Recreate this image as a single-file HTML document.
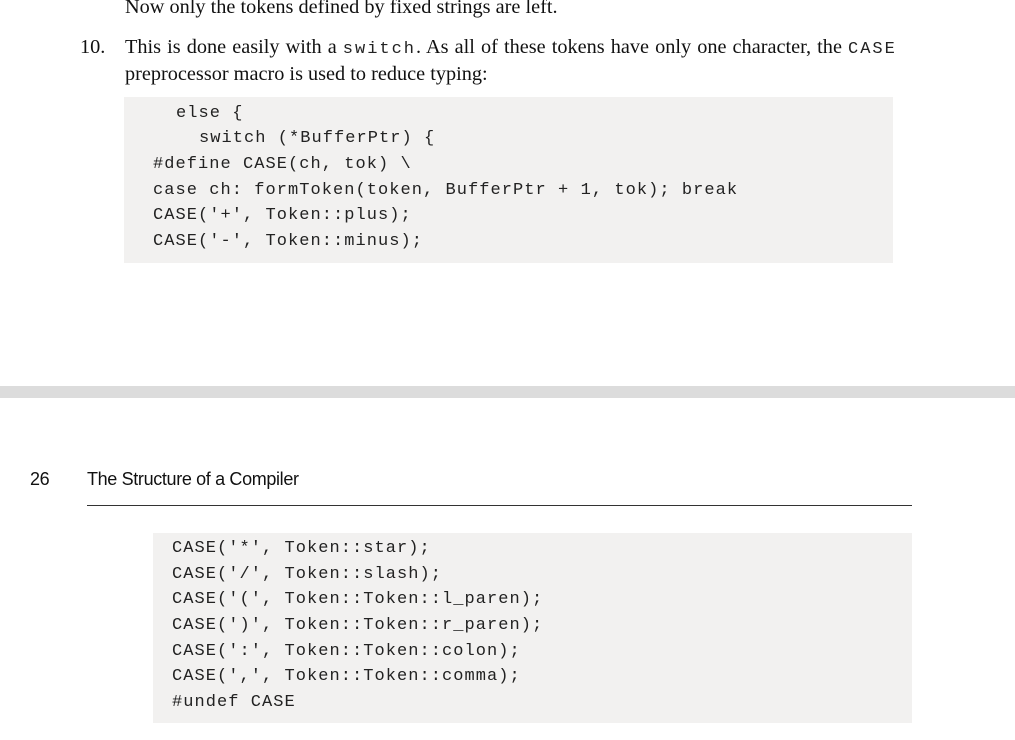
<!DOCTYPE html>
<html><head><meta charset="utf-8"><style>
body{margin:0;width:1015px;height:740px;background:#fff;position:relative;overflow:hidden;font-family:"Liberation Serif",serif;color:#111}
.t{position:absolute;font-size:20.3px;white-space:nowrap;line-height:1}
.m{font-family:"Liberation Mono",monospace;font-size:17px;letter-spacing:2px;color:#222}
.box{position:absolute;background:#f2f1f0}
.cl{position:absolute;white-space:pre;font-family:"Liberation Mono",monospace;font-size:17px;letter-spacing:1.05px;color:#222;line-height:1}
.band{position:absolute;left:0;top:386px;width:1015px;height:12px;background:#dcdcdc}
.s{position:absolute;font-family:"Liberation Sans",sans-serif;font-size:18px;letter-spacing:-0.35px;color:#111;white-space:nowrap}
</style></head><body>
<div class="t" style="left:125px;top:-3px">Now only the tokens defined by fixed strings are left.</div>
<div class="t" style="left:80px;top:37px">10.</div>
<div class="t" style="left:125px;top:37px;word-spacing:1px">This is done easily with a <span class="m" style="word-spacing:0">switch</span>. As all of these tokens have only one character, the <span class="m">CASE</span></div>
<div class="t" style="left:125px;top:64px">preprocessor macro is used to reduce typing:</div>
<div class="box" style="left:124px;top:97px;width:769px;height:166px"></div>
<div class="cl" style="left:176px;top:105px">else {</div>
<div class="cl" style="left:199px;top:130px">switch (*BufferPtr) {</div>
<div class="cl" style="left:153px;top:156px">#define CASE(ch, tok) \</div>
<div class="cl" style="left:153px;top:182px">case ch: formToken(token, BufferPtr + 1, tok); break</div>
<div class="cl" style="left:153px;top:207px">CASE('+', Token::plus);</div>
<div class="cl" style="left:153px;top:233px">CASE('-', Token::minus);</div>
<div class="band"></div>
<div class="s" style="left:30px;top:469px">26</div>
<div class="s" style="left:87px;top:469px">The Structure of a Compiler</div>
<div style="position:absolute;left:87px;top:505px;width:825px;height:1px;background:#333"></div>
<div class="box" style="left:153px;top:533px;width:759px;height:190px"></div>
<div class="cl" style="left:172px;top:540px">CASE('*', Token::star);</div>
<div class="cl" style="left:172px;top:566px">CASE('/', Token::slash);</div>
<div class="cl" style="left:172px;top:591px">CASE('(', Token::Token::l_paren);</div>
<div class="cl" style="left:172px;top:617px">CASE(')', Token::Token::r_paren);</div>
<div class="cl" style="left:172px;top:643px">CASE(':', Token::Token::colon);</div>
<div class="cl" style="left:172px;top:668px">CASE(',', Token::Token::comma);</div>
<div class="cl" style="left:172px;top:694px">#undef CASE</div>
</body></html>
